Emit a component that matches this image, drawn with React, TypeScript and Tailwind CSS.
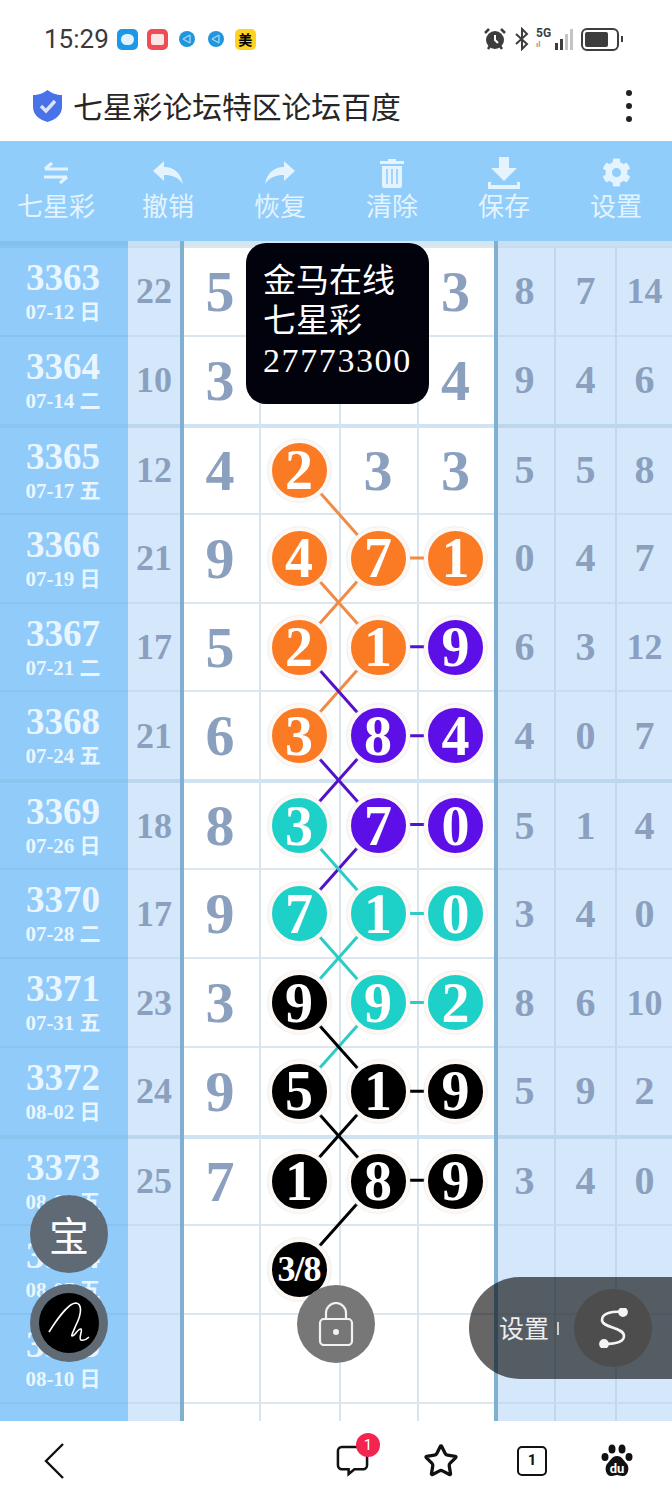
import { FaCog } from "react-icons/fa"
import { Star } from "lucide-react"

type Ball = { n: string; c: "o" | "p" | "t" | "k" }
type Cell = string | Ball

interface Row {
  no: string
  date: string
  sum: string
  a: string
  mid: Cell[]
  right: string[]
  heavy?: boolean
}

const o = (n: string): Ball => ({ n, c: "o" })
const p = (n: string): Ball => ({ n, c: "p" })
const t = (n: string): Ball => ({ n, c: "t" })
const k = (n: string): Ball => ({ n, c: "k" })

const rows: Row[] = [
  { no: "3363", date: "07-12 日", sum: "22", a: "5", mid: ["", "", "3"], right: ["8", "7", "14"] },
  { no: "3364", date: "07-14 二", sum: "10", a: "3", mid: ["", "", "4"], right: ["9", "4", "6"] },
  { no: "3365", date: "07-17 五", sum: "12", a: "4", mid: [o("2"), "3", "3"], right: ["5", "5", "8"], heavy: true },
  { no: "3366", date: "07-19 日", sum: "21", a: "9", mid: [o("4"), o("7"), o("1")], right: ["0", "4", "7"] },
  { no: "3367", date: "07-21 二", sum: "17", a: "5", mid: [o("2"), o("1"), p("9")], right: ["6", "3", "12"] },
  { no: "3368", date: "07-24 五", sum: "21", a: "6", mid: [o("3"), p("8"), p("4")], right: ["4", "0", "7"] },
  { no: "3369", date: "07-26 日", sum: "18", a: "8", mid: [t("3"), p("7"), p("0")], right: ["5", "1", "4"], heavy: true },
  { no: "3370", date: "07-28 二", sum: "17", a: "9", mid: [t("7"), t("1"), t("0")], right: ["3", "4", "0"] },
  { no: "3371", date: "07-31 五", sum: "23", a: "3", mid: [k("9"), t("9"), t("2")], right: ["8", "6", "10"] },
  { no: "3372", date: "08-02 日", sum: "24", a: "9", mid: [k("5"), k("1"), k("9")], right: ["5", "9", "2"] },
  { no: "3373", date: "08-05 五", sum: "25", a: "7", mid: [k("1"), k("8"), k("9")], right: ["3", "4", "0"], heavy: true },
  { no: "3374", date: "08-07 五", sum: "", a: "", mid: [k("3/8"), "", ""], right: ["", "", ""] },
  { no: "3375", date: "08-10 日", sum: "", a: "", mid: ["", "", ""], right: ["", "", ""] },
  { no: "", date: "", sum: "", a: "", mid: ["", "", ""], right: ["", "", ""] },
]

const ballBg = {
  o: "bg-[#fb7a24]",
  p: "bg-[#5d0fe8]",
  t: "bg-[#1dd0c8]",
  k: "bg-black",
}

const rightCol = [
  "w-[56px] pr-[3px]",
  "w-[61px] border-l-[2px] border-l-[#bfd8ec]",
  "flex-1 border-l-[2px] border-l-[#bfd8ec]",
]

const lineColor = { o: "#f08a45", p: "#5212c8", t: "#2accc6", k: "#000000" }
const colX = [57, 136, 214]
const rowY = (r: number) => 228 + (r - 2) * 88.9

// line segments: [row, col, row, col, colour]
const links: [number, number, number, number, keyof typeof lineColor][] = [
  [2, 0, 3, 1, "o"],
  [3, 0, 4, 1, "o"],
  [3, 1, 4, 0, "o"],
  [3, 1, 3, 2, "o"],
  [4, 1, 5, 0, "o"],
  [4, 0, 5, 1, "p"],
  [4, 1, 4, 2, "p"],
  [5, 1, 5, 2, "p"],
  [5, 0, 6, 1, "p"],
  [5, 1, 6, 0, "p"],
  [6, 1, 6, 2, "p"],
  [6, 1, 7, 0, "p"],
  [6, 0, 7, 1, "t"],
  [7, 1, 7, 2, "t"],
  [7, 0, 8, 1, "t"],
  [7, 1, 8, 0, "t"],
  [8, 1, 8, 2, "t"],
  [8, 1, 9, 0, "t"],
  [8, 0, 9, 1, "k"],
  [9, 1, 9, 2, "k"],
  [9, 0, 10, 1, "k"],
  [9, 1, 10, 0, "k"],
  [10, 1, 10, 2, "k"],
  [10, 1, 11, 0, "k"],
]

function BallCell({ cell }: { cell: Cell }) {
  if (typeof cell === "string") {
    return cell ? <span className="text-[58px] font-bold text-[#8ba0be]">{cell}</span> : null
  }
  const small = cell.n.length > 1
  return (
    <div
      className={`relative z-20 flex h-[63px] w-[63px] shrink-0 items-center justify-center rounded-full border-[4px] border-[#fdf8f4] text-white shadow-[0_0_2px_#c9d3dc] ${ballBg[cell.c]}`}
    >
      <span className={small ? "text-[36px] font-bold tracking-[-1px]" : "text-[56px] font-bold"}>{cell.n}</span>
    </div>
  )
}

function TableRow({ row }: { row: Row }) {
  const mainBorder = row.heavy ? "border-t-[4px] border-t-[#cfe3f3]" : "border-t-[2px] border-t-[#dbe6ee]"
  const sideBorder = row.heavy ? "border-t-[4px] border-t-[#bcd6ec]" : "border-t-[2px] border-t-[#c6dcef]"
  return (
    <div className="flex h-[88.9px] shrink-0 font-['Liberation_Serif',serif]">
      <div className={`flex w-[128px] flex-col items-center justify-center bg-[#90cbfa] pr-[2px] text-[#eaf6ff] ${row.heavy ? "border-t-[4px] border-t-[#8cc4f0]" : "border-t-[2px] border-t-[#88c3f2]"}`}>
        <span className="text-[37px] font-bold leading-[36px]">{row.no}</span>
        <span className="mt-[5px] text-[21px] font-bold leading-[22px] font-['Liberation_Serif','Noto_Sans_CJK_SC',serif]">{row.date}</span>
      </div>
      <div className={`flex w-[52px] items-center justify-center bg-[#d5e8fb] text-[36px] font-bold text-[#8ba0be] ${sideBorder}`}>
        {row.sum}
      </div>
      <div className="w-[4px] bg-[#7fb0cf]" />
      <div className={`flex w-[75px] items-center justify-center bg-white pr-[3px] text-[58px] font-bold text-[#8ba0be] ${mainBorder}`}>
        {row.a}
      </div>
      <div className={`flex w-[80px] items-center justify-center border-l-[2px] border-l-[#d7e5ee] bg-white pr-[2px] ${mainBorder}`}>
        <BallCell cell={row.mid[0]} />
      </div>
      <div className={`flex w-[78px] items-center justify-center border-l-[2px] border-l-[#d7e5ee] bg-white pr-[2px] ${mainBorder}`}>
        <BallCell cell={row.mid[1]} />
      </div>
      <div className={`flex w-[77px] items-center justify-center border-l-[2px] border-l-[#d7e5ee] bg-white pr-[2px] ${mainBorder}`}>
        <BallCell cell={row.mid[2]} />
      </div>
      <div className="w-[4px] bg-[#7fb0cf]" />
      {row.right.map((v, i) => (
        <div
          key={i}
          className={`flex items-center justify-center bg-[#d5e8fb] text-[40px] font-bold text-[#8ba0be] ${rightCol[i]} ${sideBorder}`}
        >
          <span className={v.length > 1 ? "text-[36px]" : ""}>{v}</span>
        </div>
      ))}
    </div>
  )
}

function ToolItem({ icon, label }: { icon: React.ReactNode; label: string }) {
  return (
    <div className="flex w-[112px] flex-col items-center">
      <div className="flex h-[32px] items-center justify-center">{icon}</div>
      <span className="text-[26px] leading-[31px] text-[#e4f3fe]">{label}</span>
    </div>
  )
}

function ArrowIcon({ flip }: { flip?: boolean }) {
  return (
    <svg width="30" height="23" viewBox="0 0 30 23" fill="#e4f3fe" className={flip ? "-scale-x-100" : ""}>
      <path d="M0 10L11 0v6c10 0 17 6 19 17-5-7-11-9-19-9v6z" />
    </svg>
  )
}

function SmallGlobe() {
  return (
    <svg width="16" height="16" viewBox="0 0 16 16">
      <circle cx="8" cy="8" r="8" fill="#2196dd" />
      <path d="M4 8l7-4M4 8l7 4M11 4v8" stroke="#a8d9f7" strokeWidth="1.3" fill="none" />
    </svg>
  )
}

export default function App() {
  return (
    <div className="relative flex h-[1500px] w-[672px] flex-col overflow-hidden bg-white font-['Noto_Sans_CJK_SC','Noto_Sans',sans-serif]">
      {/* status bar */}
      <div className="flex h-[70px] shrink-0 items-center px-[44px] pt-[8px]">
        <span className="font-['Roboto',sans-serif] text-[26px] text-[#3a3a3a]">15:29</span>
        <div className="ml-[8px] flex items-center">
          <div className="flex h-[21px] w-[21px] items-center justify-center rounded-[5px] bg-[#1b98e6]">
            <div className="h-[11px] w-[13px] rounded-full bg-[#dff3ff]" />
          </div>
          <div className="ml-[9px] flex h-[21px] w-[21px] items-center justify-center rounded-[5px] bg-[#ee4d55]">
            <div className="h-[11px] w-[13px] rounded-[2px] bg-[#fbe5e5]" />
          </div>
          <div className="ml-[11px]"><SmallGlobe /></div>
          <div className="ml-[13px]"><SmallGlobe /></div>
          <div className="ml-[11px] flex h-[21px] w-[21px] items-center justify-center rounded-[5px] bg-[#ffd21f] text-[14px] font-bold leading-none text-black">美</div>
        </div>
        <div className="ml-auto mr-[5px] flex items-center">
          <svg width="24" height="24" viewBox="0 0 24 24" className="text-[#3d3d3d]">
            <circle cx="12" cy="13" r="9" fill="currentColor" />
            <path d="M2 6l4-4M22 6l-4-4M5 22l2-3M19 22l-2-3" stroke="currentColor" strokeWidth="2.5" />
            <path d="M12 8v5l3 3" stroke="#fff" strokeWidth="2" fill="none" />
          </svg>
          <svg width="16" height="24" viewBox="0 0 16 24" className="ml-[7px]">
            <path d="M2 7l11 10-5 5V2l5 5L2 17" fill="none" stroke="#3d3d3d" strokeWidth="2" />
          </svg>
          <div className="ml-[6px] flex h-[24px] w-[18px] flex-col font-['Roboto',sans-serif] text-[12px] font-bold leading-[12px] text-[#3d3d3d]">
            <span>5G</span>
            <span className="text-[8px] text-[#999]">ıl</span>
          </div>
          <div className="ml-[1px] flex h-[22px] items-end gap-[2px]">
            <div className="h-[7px] w-[3px] bg-[#3d3d3d]" />
            <div className="h-[11px] w-[3px] bg-[#3d3d3d]" />
            <div className="h-[16px] w-[3px] bg-[#c4c4c4]" />
            <div className="h-[21px] w-[3px] bg-[#c4c4c4]" />
          </div>
          <div className="ml-[8px] flex h-[23px] w-[38px] items-center rounded-[6px] border-[2px] border-[#3d3d3d] p-[2px]">
            <div className="h-full w-[23px] rounded-[2px] bg-[#3d3d3d]" />
          </div>
          <div className="ml-[2px] h-[6px] w-[2px] bg-[#3d3d3d]" />
        </div>
      </div>

      {/* title bar */}
      <div className="flex h-[71px] shrink-0 items-center pl-[32px] pr-[40px]">
        <svg width="31" height="34" viewBox="0 0 31 34">
          <path d="M15.5 1C19 4 25 6 30 6v12c0 8-7 13-14.5 15C8 31 1 26 1 18V6c5 0 11-2 14.5-5z" fill="#4a72e8" />
          <path d="M9 17l5 5 9-10" fill="none" stroke="#dbe4fb" strokeWidth="3.5" />
        </svg>
        <span className="ml-[10px] text-[29.8px] text-[#262626]">七星彩论坛特区论坛百度</span>
        <div className="ml-auto flex flex-col gap-[7px]">
          <div className="h-[6px] w-[6px] rounded-full bg-[#222]" />
          <div className="h-[6px] w-[6px] rounded-full bg-[#222]" />
          <div className="h-[6px] w-[6px] rounded-full bg-[#222]" />
        </div>
      </div>

      {/* toolbar */}
      <div className="flex h-[100px] shrink-0 items-center bg-[#90cdfb] pb-[6px]">
        <ToolItem
          label="七星彩"
          icon={
            <svg width="26" height="24" viewBox="0 0 26 24" fill="none" stroke="#e4f3fe" strokeWidth="3">
              <path d="M2 8h23M2 8l7-6" />
              <path d="M24 16H1M24 16l-7 6" />
            </svg>
          }
        />
        <ToolItem label="撤销" icon={<ArrowIcon />} />
        <ToolItem label="恢复" icon={<ArrowIcon flip />} />
        <ToolItem
          label="清除"
          icon={
            <svg width="26" height="30" viewBox="0 0 26 30" fill="#e4f3fe">
              <path d="M9 1h8v2h8v3H1V3h8z" />
              <path d="M3 8h20v20a2 2 0 0 1-2 2H5a2 2 0 0 1-2-2z" />
              <path d="M8 11v15M13 11v15M18 11v15" stroke="#90cdfb" strokeWidth="1.6" />
            </svg>
          }
        />
        <ToolItem
          label="保存"
          icon={
            <svg width="34" height="32" viewBox="0 0 34 32" fill="#e4f3fe">
              <path d="M12 0h10v11h8L17 24 4 11h8z" />
              <path d="M1 25h3v3h26v-3h3v7H1z" />
            </svg>
          }
        />
        <ToolItem label="设置" icon={<FaCog size={29} color="#e4f3fe" />} />
      </div>

      {/* chart table */}
      <div className="relative flex min-h-0 flex-1 flex-col overflow-hidden">
        <div className="flex h-[5px] shrink-0">
          <div className="w-[128px] bg-[#84c0ee]" />
          <div className="w-[52px] bg-[#c9dff4]" />
          <div className="w-[4px] bg-[#7fb0cf]" />
          <div className="w-[310px] bg-[#d5e6f3]" />
          <div className="w-[4px] bg-[#7fb0cf]" />
          <div className="flex-1 bg-[#c9dff4]" />
        </div>
        {rows.map((row, i) => (
          <TableRow key={i} row={row} />
        ))}

        {/* connecting lines of the trend chart */}
        <svg className="absolute left-[242px] top-0 z-10" width="260" height="1180">
          {links.map(([r1, c1, r2, c2, col], i) => (
            <line
              key={i}
              x1={colX[c1]}
              y1={rowY(r1)}
              x2={colX[c2]}
              y2={rowY(r2)}
              stroke={lineColor[col]}
              strokeWidth="3"
            />
          ))}
        </svg>

        {/* black tooltip */}
        <div className="absolute left-[246px] top-[2px] z-30 flex h-[161px] w-[183px] flex-col rounded-[20px] bg-[#02020c] pl-[17px] pt-[15px] text-[33px] leading-[40px] text-white">
          <span>金马在线</span>
          <span>七星彩</span>
          <span className="mt-[3px] font-['Liberation_Serif',serif] text-[34px] tracking-[1.6px]">27773300</span>
        </div>
      </div>

      {/* bottom nav */}
      <div className="relative z-40 flex h-[79px] shrink-0 items-center bg-white">
        <svg width="22" height="36" viewBox="0 0 22 36" fill="none" stroke="#111" strokeWidth="2.4" className="ml-[43px]">
          <path d="M20 1L3 18l17 17" />
        </svg>
        <div className="relative ml-[271px]">
          <svg width="33" height="33" viewBox="0 0 34 34" fill="none" stroke="#111" strokeWidth="2.6">
            <path d="M6 3h22a4 4 0 0 1 4 4v15a4 4 0 0 1-4 4h-9l-6 5v-5H6a4 4 0 0 1-4-4V7a4 4 0 0 1 4-4z" />
          </svg>
          <div className="absolute left-[20px] top-[-11px] flex h-[24px] w-[24px] items-center justify-center rounded-full bg-[#f3244f] font-['Roboto',sans-serif] text-[15px] text-white">1</div>
        </div>
        <Star size={36} strokeWidth={2.2} color="#111" className="ml-[54px]" />
        <div className="ml-[58px] flex h-[30px] w-[30px] items-center justify-center rounded-[5px] border-[2.5px] border-[#111] font-['Roboto',sans-serif] text-[15px] font-bold text-[#111]">1</div>
        <svg width="32" height="34" viewBox="0 0 32 34" className="ml-[54px]" fill="#111">
          <ellipse cx="4" cy="13" rx="3.5" ry="4" />
          <ellipse cx="11" cy="5" rx="3.5" ry="4.5" />
          <ellipse cx="21" cy="5" rx="3.5" ry="4.5" />
          <ellipse cx="28" cy="13" rx="3.5" ry="4" />
          <path d="M16 12c5 0 7 5 10 8 3 4 1 13-5 12-2 0-3-1-5-1s-3 1-5 1c-6 1-8-8-5-12 3-3 5-8 10-8z" />
          <text x="16" y="29" textAnchor="middle" fill="#fff" fontSize="13" fontWeight="700" fontFamily="Roboto, sans-serif">du</text>
        </svg>
      </div>

      {/* floating buttons */}
      <div className="absolute left-[30px] top-[1195px] z-50 flex h-[78px] w-[78px] items-center justify-center rounded-full bg-[#5f6a75] text-[40px] text-white">宝</div>
      <div className="absolute left-[30px] top-[1284px] z-50 flex h-[78px] w-[78px] items-center justify-center rounded-full bg-[#5f6a75]">
        <div className="flex h-[60px] w-[60px] items-center justify-center rounded-full bg-black">
          <svg width="60" height="60" viewBox="0 0 60 60" fill="none" stroke="#fff" strokeWidth="1.6">
            <path d="M10 39C18 26 30 10 37 10c6 1 6 10 0 22-2 5-5 11-4 11 3 0 6-8 9-7 2 1-3 10 0 11 3 1 6-1 8-3" />
          </svg>
        </div>
      </div>
      <div className="absolute left-[297px] top-[1285px] z-50 flex h-[78px] w-[78px] items-center justify-center rounded-full bg-[#777]">
        <svg width="36" height="44" viewBox="0 0 36 44" fill="none" stroke="#f2f2f2" strokeWidth="2.2">
          <path d="M8 17v-6a10 10 0 0 1 20 0v6" />
          <rect x="2" y="17" width="32" height="26" rx="4" />
          <circle cx="18" cy="30" r="3" fill="#f2f2f2" stroke="none" />
        </svg>
      </div>
      <div className="absolute left-[469px] top-[1277px] z-50 flex h-[102px] w-[203px] items-center rounded-l-full bg-black/60 pl-[30px]">
        <span className="text-[25px] text-[#eee]">设置</span>
        <span className="ml-[8px] h-[13px] w-[2px] bg-[#ccc]" />
        <div className="ml-[15px] flex h-[78px] w-[78px] shrink-0 items-center justify-center rounded-full bg-[#4d4d4d]">
          <svg width="30" height="40" viewBox="0 0 30 40" fill="none" stroke="#f4f4f4" strokeWidth="2.6">
            <path d="M25 4C14 3 4 5 4 12c0 8 22 7 22 16 0 7-12 8-20 8" />
            <circle cx="25" cy="4" r="3.6" fill="#f4f4f4" />
            <circle cx="6" cy="36" r="3.6" fill="#f4f4f4" />
          </svg>
        </div>
      </div>
    </div>
  )
}
